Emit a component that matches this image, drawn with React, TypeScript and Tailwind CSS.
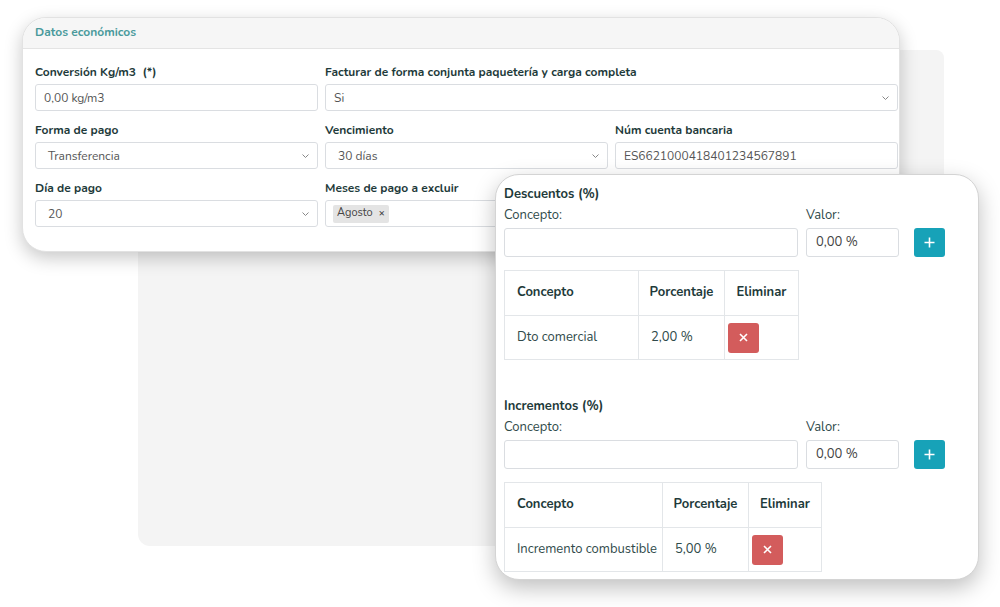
import React from "react";

const font = { fontFamily: "Nunito, Lato, 'Open Sans', sans-serif" };

const Chevron = () => (
  <svg width="7" height="4" viewBox="0 0 7 4" className="absolute right-[8px] top-1/2 -translate-y-1/2">
    <path d="M0.5 0.5l3 3 3-3" fill="none" stroke="#888" strokeWidth="1" />
  </svg>
);

const Field: React.FC<{ label: string; className?: string; children: React.ReactNode }> = ({ label, className, children }) => (
  <div className={`flex flex-col ${className ?? ""}`}>
    <label className="text-[12px] leading-4 font-bold text-[#1e3a3a] mb-1 whitespace-pre">{label}</label>
    {children}
  </div>
);

const Box: React.FC<{ value?: string; select?: boolean; padded?: boolean; children?: React.ReactNode }> = ({ value, select, padded, children }) => (
  <div className={`relative h-[27px] border border-[#dadde1] rounded-[3px] bg-white flex items-center text-[12px] text-[#555] ${padded ? "pl-[12px]" : "pl-[8px]"}`}>
    {children ?? value}
    {select && <Chevron />}
  </div>
);

const PlusBtn = () => (
  <button className="w-[31px] h-[29px] rounded-[3px] bg-[#17a2b8] flex items-center justify-center ml-[15px] self-end shrink-0">
    <svg width="11" height="11" viewBox="0 0 11 11">
      <path d="M5.5 0.5v10M0.5 5.5h10" stroke="white" strokeWidth="1.6" />
    </svg>
  </button>
);

const DelBtn = () => (
  <button className="w-[31px] h-[30px] rounded-[3px] bg-[#d35c5c] flex items-center justify-center">
    <svg width="9" height="9" viewBox="0 0 9 9">
      <path d="M1 1l7 7M8 1L1 8" stroke="white" strokeWidth="1.6" />
    </svg>
  </button>
);

const Section: React.FC<{
  title: string;
  concepto: string;
  pct: string;
  cols: [number, number, number];
}> = ({ title, concepto, pct, cols }) => (
  <div className="flex flex-col">
    <div className="text-[13px] leading-4 font-bold text-[#1e3a3a]">{title}</div>
    <div className="flex mt-[5px]">
      <div className="flex flex-col w-[294px]">
        <span className="text-[13px] leading-4 text-[#2f4a4a] mb-[5px]">Concepto:</span>
        <div className="h-[29px] border border-[#dadde1] rounded-[3px] bg-white" />
      </div>
      <div className="flex flex-col w-[93px] ml-2">
        <span className="text-[13px] leading-4 text-[#2f4a4a] mb-[5px]">Valor:</span>
        <div className="h-[29px] border border-[#dadde1] rounded-[3px] bg-white flex items-center pl-[9px] text-[13px] text-[#444]">
          0,00 %
        </div>
      </div>
      <PlusBtn />
    </div>
    <table className="mt-[13px] border-collapse text-[13px] text-[#1e3a3a] self-start">
      <thead>
        <tr className="h-[45px]">
          <th style={{ width: cols[0] }} className="border border-[#e3e6e9] font-bold text-left pl-[12px]">Concepto</th>
          <th style={{ width: cols[1] }} className="border border-[#e3e6e9] font-bold text-center">Porcentaje</th>
          <th style={{ width: cols[2] }} className="border border-[#e3e6e9] font-bold text-center">Eliminar</th>
        </tr>
      </thead>
      <tbody>
        <tr className="h-[44px]">
          <td className="border border-[#e3e6e9] pl-[12px] text-[#2f4a4a]">{concepto}</td>
          <td className="border border-[#e3e6e9] pl-[12px] text-[#2f4a4a]">{pct}</td>
          <td className="border border-[#e3e6e9] pl-[3px]"><DelBtn /></td>
        </tr>
      </tbody>
    </table>
  </div>
);

export default function App() {
  return (
    <div className="relative w-[1000px] h-[607px] bg-white overflow-hidden" style={font}>
      {/* back panel */}
      <div className="absolute left-[138px] top-[50px] w-[806px] h-[496px] bg-[#f4f4f4] rounded-bl-[12px] rounded-tr-[8px]" />

      {/* Datos económicos card */}
      <div className="absolute left-[22px] top-[17px] w-[878px] h-[235px] bg-white rounded-[24px] border border-[#e2e2e2] shadow-[0_6px_18px_rgba(0,0,0,0.22)] overflow-hidden">
        <div className="h-[31px] bg-[#f6f6f6] border-b border-[#e4e4e4] flex items-center pl-[12px]">
          <span className="text-[12px] font-bold text-[#4a9a9c] -mt-[2px]">Datos económicos</span>
        </div>
        <div className="px-[12px] pt-[15px] grid grid-cols-[283px_283px_283px] gap-x-[7px] gap-y-[11px]">
          <Field label="Conversión Kg/m3  (*)">
            <Box value="0,00 kg/m3" />
          </Field>
          <Field label="Facturar de forma conjunta paquetería y carga completa" className="col-span-2">
            <Box value="Si" select />
          </Field>
          <Field label="Forma de pago">
            <Box value="Transferencia" select padded />
          </Field>
          <Field label="Vencimiento">
            <Box value="30 días" select padded />
          </Field>
          <Field label="Núm cuenta bancaria">
            <Box value="ES6621000418401234567891" />
          </Field>
          <Field label="Día de pago">
            <Box value="20" select padded />
          </Field>
          <Field label="Meses de pago a excluir">
            <Box>
              <span className="bg-[#e4e4e4] rounded-[2px] h-[18px] px-[4px] flex items-center text-[11px] text-[#444] -ml-[1px]">
                Agosto <span className="ml-[6px] font-bold text-[10px]">×</span>
              </span>
            </Box>
          </Field>
        </div>
      </div>

      {/* Descuentos / Incrementos card */}
      <div className="absolute left-[495px] top-[174px] w-[484px] h-[406px] bg-white rounded-[24px] border border-[#d4d4d4] shadow-[0_8px_22px_rgba(0,0,0,0.25)] pl-[8px] pt-[11px] flex flex-col">
        <Section title="Descuentos (%)" concepto="Dto comercial" pct="2,00 %" cols={[134, 86, 74]} />
        <div className="mt-[38px]">
          <Section title="Incrementos (%)" concepto="Incremento combustible" pct="5,00 %" cols={[158, 86, 73]} />
        </div>
      </div>
    </div>
  );
}
